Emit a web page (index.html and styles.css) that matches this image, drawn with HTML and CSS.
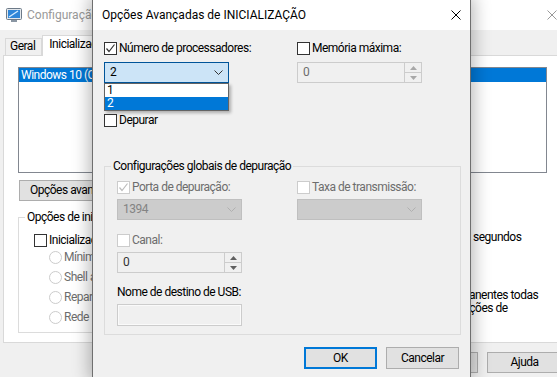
FILE: index.html
```html
<!DOCTYPE html>
<html lang="pt-BR">
<head>
<meta charset="utf-8">
<title>Configuração do Sistema</title>
<link rel="stylesheet" href="styles.css">
</head>
<body>
<div class="win">
  <div class="titlebar">
    <svg class="app-icon" width="16" height="16" viewBox="0 0 16 16">
      <rect x="0.5" y="1.5" width="15" height="11" rx="1" fill="#e4e8ec" stroke="#6d7a88"/>
      <rect x="2" y="3" width="12" height="8" fill="#2f86d8"/>
      <path d="M3 10 L12 4" stroke="#d6ecff" stroke-width="1.3"/>
      <rect x="5" y="13" width="6" height="2" fill="#8a96a3"/>
    </svg>
    <span class="win-title">Configuração do Sistema</span>
    <svg class="win-close" width="10" height="10" viewBox="0 0 10 10"><path d="M0.5 0.5 L9.5 9.5 M9.5 0.5 L0.5 9.5" stroke="#999" stroke-width="1"/></svg>
  </div>
  <div class="tabs">
    <div class="tab">Geral</div>
    <div class="tab active">Inicialização do Windows</div>
    <div class="tab">Serviços</div>
  </div>
  <div class="panel">
    <div class="listbox">
      <div class="list-row">Windows 10 (C:\WINDOWS) : Sistema operacional atual; Sistema operacional padrão</div>
    </div>
    <div class="btn-row">
      <div class="btn">Opções avançadas...</div>
      <div class="btn">Definir como padrão</div>
      <div class="btn">Excluir</div>
    </div>
    <div class="lower">
      <fieldset class="group boot-group">
        <legend>Opções de inicialização</legend>
        <div class="boot-inner">
          <div class="chk-line"><span class="cb"></span>Inicialização segura</div>
          <div class="radios">
            <div class="radio-line"><span class="rb"></span>Mínima</div>
            <div class="radio-line"><span class="rb"></span>Shell alternativo</div>
            <div class="radio-line"><span class="rb"></span>Reparo do Active Directory</div>
            <div class="radio-line"><span class="rb"></span>Rede</div>
          </div>
        </div>
      </fieldset>
      <div class="side">
        <div class="timeout"><span class="tl">Tempo limite:</span><span class="tbox">30</span><span class="sec">segundos</span></div>
        <div class="perm"><span class="cb"></span><span>Tornar permanentes todas<br>as configurações de<br>inicialização</span></div>
      </div>
    </div>
  </div>
  <div class="footer">
    <div class="btn">OK</div>
    <div class="btn">Cancelar</div>
    <div class="btn">Aplicar</div>
    <div class="btn">Ajuda</div>
  </div>
</div>

<div class="dialog">
  <div class="dlg-titlebar">
    <span class="dlg-title">Opções Avançadas de INICIALIZAÇÃO</span>
    <svg class="dlg-close" width="10" height="10" viewBox="0 0 10 10"><path d="M0.5 0.5 L9.5 9.5 M9.5 0.5 L0.5 9.5" stroke="#000" stroke-width="1"/></svg>
  </div>
  <div class="dlg-body">
    <div class="cols top-cols">
      <div class="col">
        <div class="chk-line"><span class="cb"><svg width="11" height="11" viewBox="0 0 11 11"><path d="M1.5 5.5 L4 8.5 L9.5 1.5" fill="none" stroke="#333" stroke-width="1.2"/></svg></span>Número de processadores:</div>
        <div class="combo open">
          <span>2</span>
          <svg class="chev" width="9" height="5" viewBox="0 0 9 5"><path d="M0.5 0.5 L4.5 4.5 L8.5 0.5" fill="none" stroke="#333"/></svg>
          <div class="popup">
            <div class="opt">1</div>
            <div class="opt sel">2</div>
          </div>
        </div>
        <div class="chk-line depurar"><span class="cb"></span>Depurar</div>
      </div>
      <div class="col">
        <div class="chk-line"><span class="cb"></span>Memória máxima:</div>
        <div class="spin dis">
          <span class="val">0</span>
          <span class="spin-btns">
            <span><svg width="7" height="4" viewBox="0 0 7 4"><path d="M0 4 L3.5 0 L7 4Z" fill="#a8a8a8"/></svg></span>
            <span><svg width="7" height="4" viewBox="0 0 7 4"><path d="M0 0 L3.5 4 L7 0Z" fill="#a8a8a8"/></svg></span>
          </span>
        </div>
      </div>
    </div>

    <fieldset class="group dbg-group">
      <legend>Configurações globais de depuração</legend>
      <div class="cols dbg-cols">
        <div class="col">
          <div class="chk-line dis"><span class="cb dis"><svg width="11" height="11" viewBox="0 0 11 11"><path d="M1.5 5.5 L4 8.5 L9.5 1.5" fill="none" stroke="#bcbcbc" stroke-width="1.2"/></svg></span>Porta de depuração:</div>
          <div class="combo dis">
            <span>1394</span>
            <svg class="chev" width="9" height="5" viewBox="0 0 9 5"><path d="M0.5 0.5 L4.5 4.5 L8.5 0.5" fill="none" stroke="#b0b0b0"/></svg>
          </div>
          <div class="chk-line dis canal"><span class="cb dis"></span>Canal:</div>
          <div class="spin light">
            <span class="val">0</span>
            <span class="spin-btns">
              <span><svg width="7" height="4" viewBox="0 0 7 4"><path d="M0 4 L3.5 0 L7 4Z" fill="#606060"/></svg></span>
              <span><svg width="7" height="4" viewBox="0 0 7 4"><path d="M0 0 L3.5 4 L7 0Z" fill="#606060"/></svg></span>
            </span>
          </div>
          <div class="usb-label">Nome de destino de USB:</div>
          <div class="textbox"></div>
        </div>
        <div class="col">
          <div class="chk-line dis"><span class="cb dis"></span>Taxa de transmissão:</div>
          <div class="combo dis">
            <span></span>
            <svg class="chev" width="9" height="5" viewBox="0 0 9 5"><path d="M0.5 0.5 L4.5 4.5 L8.5 0.5" fill="none" stroke="#b0b0b0"/></svg>
          </div>
        </div>
      </div>
    </fieldset>

    <div class="dlg-buttons">
      <div class="btn default">OK</div>
      <div class="btn">Cancelar</div>
    </div>
  </div>
</div>
</body>
</html>
```

FILE: styles.css
```css
* { box-sizing: border-box; }
html, body { margin: 0; padding: 0; }
body {
  width: 557px;
  height: 377px;
  overflow: hidden;
  position: relative;
  background: #f0f0f0;
  font-family: Roboto, "Liberation Sans", Arial, sans-serif;
  font-size: 12px;
  letter-spacing: -0.5px;
  line-height: 15px;
  color: #000;
}

/* background window */
.win { width: 575px; height: 377px; display: flex; flex-direction: column; overflow: hidden; }
.titlebar { flex: none; height: 30px; background: #fff; display: flex; align-items: center; padding-left: 6px; }
.app-icon { flex: none; margin-right: 5px; }
.win-title { flex: 1; color: #999; letter-spacing: 0; }
.win-close { flex: none; margin-right: 18px; }

.tabs { flex: none; height: 25px; display: flex; align-items: flex-end; padding-left: 5px; }
.tab { height: 17px; border: 1px solid #d9d9d9; border-bottom: none; padding: 0 6px 0 4px; line-height: 15px; background: #f0f0f0; white-space: nowrap; }
.tab.active { height: 21px; background: #fff; margin-bottom: -1px; position: relative; z-index: 1; padding: 1px 6px 0; }

.panel { flex: none; height: 288px; margin: 0 7px 0 3px; background: #fff; border: 1px solid #d9d9d9; padding: 11px 14px 0; }
.listbox { width: 529px; height: 106px; border: 1px solid #828790; background: #fff; }
.list-row { height: 14px; line-height: 14px; background: #0078d7; color: #fff; padding-left: 2px; white-space: nowrap; overflow: hidden; }

.btn { height: 21px; border: 1px solid #adadad; background: #e1e1e1; display: flex; align-items: center; justify-content: center; white-space: nowrap; }
.btn-row { display: flex; gap: 7px; margin: 7px 0 0 1px; }
.btn-row .btn { padding: 0 10px; }

.lower { display: flex; margin-top: 9px; }
.group { margin: 0; padding: 0; border: 1px solid #dcdcdc; min-width: 0; }
.group legend { padding: 0 2px; margin-left: 6px; line-height: 14px; }
.boot-group { width: 350px; flex: none; }
.boot-inner { padding: 9px 0 5px 15px; }
.radios { margin-top: -1px; padding-left: 15px; }
.radio-line { height: 20px; display: flex; align-items: center; color: #6d6d6d; white-space: nowrap; }
.rb { width: 13px; height: 13px; border: 1px solid #cccccc; border-radius: 50%; background: #fff; margin-right: 2px; flex: none; }

.side { margin-left: 12px; white-space: nowrap; }
.timeout { display: flex; align-items: center; height: 21px; margin-top: 17px; }
.tl { width: 64px; }
.tbox { width: 26px; height: 21px; border: 1px solid #7a7a7a; padding-left: 4px; line-height: 19px; }
.sec { margin-left: 3px; }
.perm { display: flex; align-items: flex-start; margin: 41px 0 0 13px; line-height: 13px; }
.perm .cb { margin-top: 0; margin-right: 3px; }

.footer { flex: none; display: flex; justify-content: flex-end; gap: 9px; padding: 9px 13px 0 0; }
.footer .btn { width: 75px; flex: none; }

/* dialog */
.dialog {
  position: absolute;
  z-index: 10;
  left: 92px;
  top: -1px;
  width: 379px;
  height: 379px;
  background: #f0f0f0;
  border: 1px solid #6f6f6f;
  box-shadow: 0 0 16px 3px rgba(0, 0, 0, 0.28);
}
.dlg-titlebar { height: 30px; background: #fff; display: flex; align-items: center; padding-left: 9px; }
.dlg-title { flex: 1; letter-spacing: 0; }
.dlg-close { flex: none; margin-right: 9px; }
.dlg-body { padding: 11px 11px 0; }

.cols { display: flex; }
.col { width: 125px; flex: none; display: flex; flex-direction: column; }
.top-cols .col + .col { margin-left: 68px; }
.dbg-cols { padding: 7px 0 8px 12px; }
.dbg-cols .col + .col { margin-left: 55px; }

.chk-line { height: 15px; display: flex; align-items: center; white-space: nowrap; }
.chk-line.dis { color: #6d6d6d; }
.cb { width: 13px; height: 13px; border: 1px solid #333; background: #fff; margin-right: 2px; flex: none; display: flex; align-items: center; justify-content: center; }
.cb.dis { border-color: #cccccc; }
.depurar { margin-top: 30px; }

.combo { position: relative; height: 21px; display: flex; align-items: center; padding: 0 5px; margin-top: 6px; }
.combo .chev { margin-left: auto; margin-right: 0; }
.combo.open { background: #cce4f7; border: 1px solid #005499; }
.combo.dis { background: #cccccc; border: 1px solid #bfbfbf; color: #838383; margin-top: 4px; }
.popup { position: absolute; left: -1px; top: 20px; width: 125px; border: 1px solid #646464; background: #fff; box-shadow: 2px 2px 3px rgba(0, 0, 0, 0.28); z-index: 2; }
.opt { height: 13px; line-height: 13px; padding-left: 2px; }
.opt.sel { background: #0078d7; color: #fff; }

.spin { height: 21px; margin-top: 6px; border: 1px solid #cccccc; background: #f0f0f0; display: flex; color: #6d6d6d; }
.spin .val { flex: 1; padding-left: 5px; line-height: 19px; }
.spin-btns { width: 17px; border-left: 1px solid #cccccc; display: flex; flex-direction: column; }
.spin-btns span { flex: 1; display: flex; align-items: center; justify-content: center; }
.spin-btns span + span { border-top: 1px solid #cccccc; }
.spin.light { margin-top: 4px; color: #333; }

.canal { margin-top: 13px; }
.usb-label { margin-top: 12px; height: 15px; white-space: nowrap; }
.textbox { margin-top: 4px; height: 22px; border: 1px solid #cccccc; background: #f0f0f0; box-shadow: inset 0 0 0 1px #fafafa; }

.dbg-group { width: 357px; margin-top: 31px; }
.dbg-group legend { margin-left: 6px; }

.dlg-buttons { display: flex; justify-content: flex-end; gap: 9px; margin-top: 12px; }
.dlg-buttons .btn { width: 73px; height: 22px; }
.btn.default { border: 2px solid #0078d7; }
```
